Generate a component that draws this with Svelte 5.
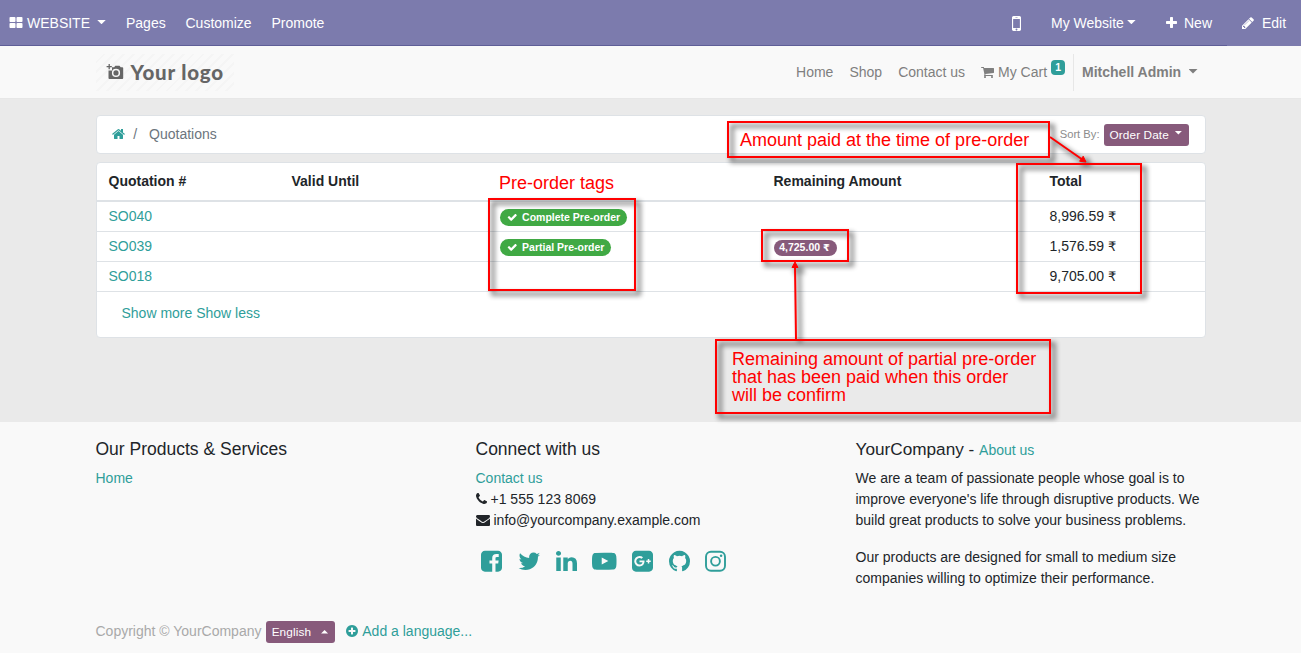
<script>
  const paths = {
    grid: 'M832 1024v384q0 52-38 90t-90 38h-512q-52 0-90-38t-38-90v-384q0-52 38-90t90-38h512q52 0 90 38t38 90zm0-768v384q0 52-38 90t-90 38h-512q-52 0-90-38t-38-90v-384q0-52 38-90t90-38h512q52 0 90 38t38 90zm896 768v384q0 52-38 90t-90 38h-512q-52 0-90-38t-38-90v-384q0-52 38-90t90-38h512q52 0 90 38t38 90zm0-768v384q0 52-38 90t-90 38h-512q-52 0-90-38t-38-90v-384q0-52 38-90t90-38h512q52 0 90 38t38 90z',
    mobile: 'M976 1408q0-33-23.5-56.5t-56.5-23.5-56.5 23.5-23.5 56.5 23.5 56.5 56.5 23.5 56.5-23.5 23.5-56.5zm208-160v-704q0-13-9.5-22.5t-22.5-9.5h-512q-13 0-22.5 9.5t-9.5 22.5v704q0 13 9.5 22.5t22.5 9.5h512q13 0 22.5-9.5t9.5-22.5zm-192-848q0-16-16-16h-160q-16 0-16 16t16 16h160q16 0 16-16zm288-16v1024q0 52-38 90t-90 38h-512q-52 0-90-38t-38-90v-1024q0-52 38-90t90-38h512q52 0 90 38t38 90z',
    plus: 'M1600 736v192q0 40-28 68t-68 28h-416v416q0 40-28 68t-68 28h-192q-40 0-68-28t-28-68v-416h-416q-40 0-68-28t-28-68v-192q0-40 28-68t68-28h416v-416q0-40 28-68t68-28h192q40 0 68 28t28 68v416h416q40 0 68 28t28 68z',
    pencil: 'M491 1536l91-91-235-235-91 91v107h128v128h107zm523-928q0-22-22-22-10 0-17 7l-542 542q-7 7-7 17 0 22 22 22 10 0 17-7l542-542q7-7 7-17zm-54-192l416 416-832 832h-416v-416zm683 96q0 53-37 90l-166 166-416-416 166-165q36-38 90-38 53 0 91 38l235 234q37 39 37 91z',
    cart: 'M704 1536q0 52-38 90t-90 38-90-38-38-90 38-90 90-38 90 38 38 90zm896 0q0 52-38 90t-90 38-90-38-38-90 38-90 90-38 90 38 38 90zm128-1088v512q0 24-16.5 42.5t-40.5 21.5l-1044 122q13 60 13 70 0 16-24 64h920q26 0 45 19t19 45-19 45-45 19h-1024q-26 0-45-19t-19-45q0-11 8-31.5t16-36 21.5-40 15.5-29.5l-177-823h-204q-26 0-45-19t-19-45 19-45 45-19h256q16 0 28.5 6.5t19.5 15.5 13 24.5 8 26 5.5 29.5 4.5 26h1201q26 0 45 19t19 45z',
    home: 'M1472 992v480q0 26-19 45t-45 19h-384v-384h-256v384h-384q-26 0-45-19t-19-45v-480q0-1 .5-3t.5-3l575-474 575 474q1 2 1 6zm223-69l-62 74q-8 9-21 11h-3q-13 0-21-7l-692-577-692 577q-12 8-24 7-13-2-21-11l-62-74q-8-10-7-23.5t11-21.5l719-599q32-26 76-26t76 26l244 204v-195q0-14 9-23t23-9h192q14 0 23 9t9 23v408l219 182q10 8 11 21.5t-7 23.5z',
    check: 'M1671 566q0 40-28 68l-724 724-136 136q-28 28-68 28t-68-28l-136-136-362-362q-28-28-28-68t28-68l136-136q28-28 68-28t68 28l294 295 656-657q28-28 68-28t68 28l136 136q28 28 28 68z',
    phone: 'M1600 1240q0 27-10 70.5t-21 68.5q-21 50-122 106-94 51-186 51-27 0-53-3.5t-57.5-12.5-47-14.5-55.5-20.5-49-18q-98-35-175-83-127-79-264-216t-216-264q-48-77-83-175-3-9-18-49t-20.5-55.5-14.5-47-12.5-57.5-3.5-53q0-92 51-186 56-101 106-122 25-11 68.5-21t70.5-10q14 0 21 3 18 6 53 76 11 19 30 54t35 63.5 31 53.5q3 4 17.5 25t21.5 35.5 7 28.5q0 20-28.5 50t-62 55-62 53-28.5 46q0 9 5 22.5t8.5 20.5 14 24 11.5 19q76 137 174 235t235 174q2 1 19 11.5t24 14 20.5 8.5 22.5 5q18 0 46-28.5t53-62 55-62 50-28.5q14 0 28.5 7t35.5 21.5 25 17.5q25 15 53.5 31t63.5 35 54 30q70 35 76 53 3 7 3 21z',
    envelope: 'M1792 710v794q0 66-47 113t-113 47h-1472q-66 0-113-47t-47-113v-794q44 49 101 87 362 246 497 345 57 42 92.5 65.5t94.5 48 110 24.5h2q51 0 110-24.5t94.5-48 92.5-65.5q170-123 498-345 57-39 100-87zm0-294q0 79-49 151t-122 123q-376 261-468 325-10 7-42.5 31t-54 38.5-52 32.5-57.5 27-50 9h-2q-23 0-50-9t-57.5-27-52-32.5-54-38.5-42.5-31q-91-64-262-182.5t-205-142.5q-62-42-117-115.5t-55-136.5q0-78 41.5-130t118.5-52h1472q65 0 112.5 47t47.5 113z',
    plusCircle: 'M1344 960v-128q0-26-19-45t-45-19h-256v-256q0-26-19-45t-45-19h-128q-26 0-45 19t-19 45v256h-256q-26 0-45 19t-19 45v128q0 26 19 45t45 19h256v256q0 26 19 45t45 19h128q26 0 45-19t19-45v-256h256q26 0 45-19t19-45zm320-64q0 209-103 385.5t-279.5 279.5-385.5 103-385.5-103-279.5-279.5-103-385.5 103-385.5 279.5-279.5 385.5-103 385.5 103 279.5 279.5 103 385.5z',
    facebook: 'M1376 128q119 0 203.5 84.5t84.5 203.5v960q0 119-84.5 203.5t-203.5 84.5h-188v-595h199l30-232h-229v-148q0-56 23.5-84t91.5-28l122-1v-207q-63-9-178-9-136 0-217.5 80t-81.5 226v171h-200v232h200v595h-532q-119 0-203.5-84.5t-84.5-203.5v-960q0-119 84.5-203.5t203.5-84.5h960z',
    twitter: 'M1684 408q-67 98-162 167 1 14 1 42 0 130-38 259.5t-115.5 248.5-184.5 210.5-258 146-323 54.5q-271 0-496-145 35 4 78 4 225 0 401-138-105-2-188-64.5t-114-159.5q33 5 61 5 43 0 85-11-112-23-185.5-111.5t-73.5-205.5v-4q68 38 146 41-66-44-105-115t-39-154q0-88 44-163 121 149 294.5 238.5t371.5 99.5q-8-38-8-74 0-134 94.5-228.5t228.5-94.5q140 0 236 102 109-21 205-78-37 115-142 178 93-10 186-50z',
    linkedin: 'M477 625v991h-330v-991h330zm21-306q1 73-50.5 122t-135.5 49h-2q-82 0-132-49t-50-122q0-74 51.5-122.5t134.5-48.5 133 48.5 51 122.5zm1166 729v568h-329v-530q0-105-40.5-164.5t-126.5-59.5q-63 0-105.5 34.5t-63.5 85.5q-11 30-11 81v553h-329q2-399 2-647t-1-296l-1-48h329v144h-2q20-32 41-56t56.5-52 87-43.5 114.5-15.5q171 0 275 113.5t104 332.5z',
    youtube: 'M711 1128l484-250-484-253v503zm185-862q168 0 324.5 4.5t229.5 9.5l73 4q1 0 17 1.5t23 3 23.5 4.5 28.5 8 28 13 31 19.5 29 26.5q6 6 15.5 18.5t29 58.5 26.5 101q8 64 12.5 136.5t5.5 113.5v176q1 145-18 290-7 55-25 99.5t-32 61.5l-14 17q-14 15-29 26.5t-31 19-28 12.5-28.5 8-24 4.5-23 3-16.5 1.5q-251 19-627 19-207-2-359.5-6.5t-200.5-7.5l-49-4-36-4q-36-5-54.5-10t-51-21-56.5-41q-6-6-15.5-18.5t-29-58.5-26.5-101q-8-64-12.5-136.5t-5.5-113.5v-176q-1-145 18-290 7-55 25-99.5t32-61.5l14-17q14-15 29-26.5t31-19.5 28-13 28.5-8 23.5-4.5 23-3 17-1.5q251-18 627-18z',
    google: 'M1045 905q0-26-6-64h-362v132h217q-3 24-16.5 50t-37.5 53-66.5 44.5-96.5 17.5q-99 0-169-71t-70-171 70-171 169-71q92 0 153 59l104-101q-108-100-257-100-160 0-272 112.5t-112 271.5 112 271.5 272 112.5q165 0 266.5-105t101.5-270zm345 46h109v-110h-109v-110h-110v110h-110v110h110v110h110v-110zm274-535v960q0 119-84.5 203.5t-203.5 84.5h-960q-119 0-203.5-84.5t-84.5-203.5v-960q0-119 84.5-203.5t203.5-84.5h960q119 0 203.5 84.5t84.5 203.5z',
    github: 'M896 128q209 0 385.5 103t279.5 279.5 103 385.5q0 251-146.5 451.5t-378.5 277.5q-27 5-40-7t-13-30q0-3 .5-76.5t.5-134.5q0-97-52-142 57-6 102.5-18t94-39 81-66.5 53-105 20.5-150.5q0-119-79-206 37-91-8-204-28-9-81 11t-92 44l-38 24q-93-26-192-26t-192 26q-16-11-42.5-27t-83.5-38.5-85-13.5q-45 113-8 204-79 87-79 206 0 85 20.5 150t52.5 105 80.5 67 94 39 102.5 18q-39 36-49 103-21 10-45 15t-57 5-65.5-21.5-55.5-62.5q-19-32-48.5-52t-49.5-24l-20-3q-21 0-29 4.5t-5 11.5 9 14 13 12l7 5q22 10 43.5 38t31.5 51l10 23q13 38 44 61.5t67 30 69.5 7 55.5-3.5l23-4q0 38 .5 88.5t.5 54.5q0 18-13 30t-40 7q-232-77-378.5-277.5t-146.5-451.5q0-209 103-385.5t279.5-279.5 385.5-103z'
  };

  const orders = [
    { name: 'SO040', tag: 'Complete Pre-order', remaining: '', total: '8,996.59' },
    { name: 'SO039', tag: 'Partial Pre-order', remaining: '4,725.00', total: '1,576.59' },
    { name: 'SO018', tag: '', remaining: '', total: '9,705.00' }
  ];

  const links = ['Home', 'Shop', 'Contact us'];
</script>

{#snippet icon(name, size = 14, x = 128, w = 1536)}
  <svg class="icon" width={(size * w) / 1792} height={size} viewBox="{x} 0 {w} 1792" aria-hidden="true"><path d={paths[name]} /></svg>
{/snippet}

{#snippet money(value)}
  {value}&nbsp;<span class="rupee">₹</span>
{/snippet}

{#snippet marks()}
  <rect x="728" y="122" width="321" height="35" />
  <rect x="489" y="199" width="146" height="91" />
  <rect x="762" y="230" width="86" height="31" />
  <rect x="1017" y="164" width="124" height="129" />
  <rect x="716" y="340" width="334" height="73" />
  <path d="M1050 137L1083 160M796 339L795 266" />
  <path class="tip" d="M1086 162l-6.4-.8 3.6-5zM795 262l3 5.5h-6z" />
{/snippet}

<div class="page">
  <nav class="topbar">
    <a class="site" href="#top">{@render icon('grid', 14, 0, 1792)}<span>WEBSITE</span><i class="caret"></i></a>
    <a class="pages" href="#top">Pages</a>
    <a class="customize" href="#top">Customize</a>
    <a href="#top">Promote</a>
    <div class="right">
      <a class="mobile" href="#top" aria-label="Mobile preview">{@render icon('mobile', 21, 512, 768)}</a>
      <a class="mysite" href="#top">My Website<i class="caret"></i></a>
      <a class="new" href="#top">{@render icon('plus', 14, 192, 1408)}<span>New</span></a>
      <a class="edit" href="#top">{@render icon('pencil', 14)}<span>Edit</span></a>
    </div>
  </nav>

  <header>
    <div class="container head">
      <a class="logo" href="#top">
        <svg width="18" height="18" viewBox="0 0 18 18" aria-hidden="true">
          <path fill="#666" fill-rule="evenodd" d="M6 4.2h2.1l1.2-1.5h4.2l1.2 1.5h1.6q.9 0 .9.9v10q0 .9-.9.9H3.4q-.9 0-.9-.9V7.6H6zM10 5.8a4.1 4.1 0 1 0 0 8.2 4.1 4.1 0 0 0 0-8.2zm0 1.5a2.6 2.6 0 1 1 0 5.2 2.6 2.6 0 0 1 0-5.2z" />
          <path d="M3.2 1v5.2M.6 3.6h5.2" stroke="#666" stroke-width="1.3" />
        </svg>
        <span>Your logo</span>
      </a>
      <div class="menu">
        {#each links as l}<a href="#top">{l}</a>{/each}
        <a class="cart" href="#top">{@render icon('cart', 14, 64, 1664)}<span>My Cart</span><sup>1</sup></a>
        <a class="user" href="#top">Mitchell Admin<i class="caret"></i></a>
      </div>
    </div>
  </header>

  <main>
    <div class="container">
      <div class="crumbs">
        <a href="#top" aria-label="Home">{@render icon('home', 14, 64, 1664)}</a>
        <span class="slash">/</span>
        <span>Quotations</span>
        <span class="sortlabel">Sort By:</span>
        <button class="purple sort">Order Date<i class="caret"></i></button>
      </div>

      <div class="card">
        <div class="row headrow">
          <span>Quotation #</span><span>Valid Until</span><span></span><span>Remaining Amount</span><span>Total</span>
        </div>
        {#each orders as o}
          <div class="row">
            <a href="#top">{o.name}</a>
            <span></span>
            <span>{#if o.tag}<b class="pill green">{@render icon('check', 10.5, 0, 1792)}{o.tag}</b>{/if}</span>
            <span>{#if o.remaining}<b class="pill plum">{@render money(o.remaining)}</b>{/if}</span>
            <span>{@render money(o.total)}</span>
          </div>
        {/each}
        <div class="more"><a href="#top">Show more</a> <a href="#top">Show less</a></div>
      </div>
    </div>
  </main>

  <footer>
    <div class="container">
      <div class="cols">
        <section>
          <h5>Our Products &amp; Services</h5>
          <a href="#top">Home</a>
        </section>
        <section>
          <h5>Connect with us</h5>
          <div><a href="#top">Contact us</a></div>
          <div class="line">{@render icon('phone', 14, 192, 1408)}<span>+1 555 123 8069</span></div>
          <div class="line">{@render icon('envelope', 14, 0, 1792)}<span>info@yourcompany.example.com</span></div>
          <div class="social">
            {@render icon('facebook', 24.5)}
            {@render icon('twitter', 24.5, 64, 1664)}
            {@render icon('linkedin', 24.5)}
            {@render icon('youtube', 24.5, 0, 1792)}
            {@render icon('google', 24.5)}
            {@render icon('github', 24.5)}
            <svg class="icon" width="21" height="24.5" viewBox="0 0 21 24.5" aria-hidden="true">
              <rect x="1" y="2.75" width="19" height="19" rx="5" fill="none" stroke="currentColor" stroke-width="1.9" />
              <circle cx="10.5" cy="12.25" r="4.4" fill="none" stroke="currentColor" stroke-width="1.9" />
              <circle cx="16.1" cy="6.7" r="1.25" />
            </svg>
          </div>
        </section>
        <section>
          <h5>YourCompany - <a href="#top">About us</a></h5>
          <p>We are a team of passionate people whose goal is to<br />improve everyone's life through disruptive products. We<br />build great products to solve your business problems.</p>
          <p>Our products are designed for small to medium size<br />companies willing to optimize their performance.</p>
        </section>
      </div>
      <div class="bottom">
        <span>Copyright © YourCompany</span>
        <button class="purple lang">English<i class="caret up"></i></button>
        <a href="#top">{@render icon('plusCircle', 14)}Add a language...</a>
      </div>
    </div>
  </footer>

  <svg class="notes" width="1301" height="653" viewBox="0 0 1301 653">
    <g class="shade">{@render marks()}</g>
    <g class="shapes">{@render marks()}</g>
    <text x="499" y="189">Pre-order tags</text>
    <text x="740" y="146">Amount paid at the time of pre-order</text>
    <text x="732" y="365">Remaining amount of partial pre-order</text>
    <text x="732" y="383">that has been paid when this order</text>
    <text x="732" y="401">will be confirm</text>
  </svg>
</div>

<style>
  :global(body) { margin: 0; }
  .page { position: relative; width: 1301px; height: 653px; overflow: hidden; display: flex; flex-direction: column; background: #f9f9f9; color: #212529; font: 14px/21px "Liberation Sans", Arial, sans-serif; }
  a { color: #2f9e9a; text-decoration: none; }
  .icon { fill: currentColor; flex: none; }
  .container { width: 1110px; margin: 0 auto; }
  .caret { display: inline-block; width: 9px; height: 4.5px; background: currentColor; clip-path: polygon(0 0, 100% 0, 50% 100%); margin-left: 7px; vertical-align: 3px; }
  .caret.up { clip-path: polygon(0 100%, 100% 100%, 50% 0); }

  .topbar { box-sizing: border-box; flex: none; height: 46px; display: flex; align-items: stretch; background: #7c7bad; border-bottom: 1px solid #5f5e97; padding-left: 9px; }
  .topbar a { color: #fff; display: flex; align-items: center; height: 46px; }
  .site span { margin-left: 4px; }
  .site { width: 117px; }
  .site .caret, .mysite .caret { margin-top: -2px; }
  .pages { width: 59.5px; }
  .customize { width: 86px; }
  .right { display: flex; margin-left: auto; }
  .mobile { width: 39px; }
  .mysite { width: 115px; }
  .mysite .caret { margin-left: 3px; }
  .new span { margin-left: 7px; }
  .new { width: 61px; }
  .topbar .edit { padding: 0 15px; background: #7c7bad; box-sizing: border-box; width: 74px; }
  .edit span { margin-left: 8px; }

  header { box-sizing: border-box; flex: none; height: 53px; border-bottom: 1px solid #e7e7e7; }
  .head { display: flex; height: 52px; align-items: center; }
  .logo { display: flex; align-items: center; width: 138px; height: 37px; box-sizing: border-box; padding-left: 10px; background: repeating-linear-gradient(135deg, #f9f9f9 0 5px, #f5f5f5 5px 7px); }
  .logo span { font: 900 20.5px/24px Lato, sans-serif; letter-spacing: 0.8px; color: #666; margin-left: 7px; white-space: nowrap; }
  .menu { display: flex; align-items: center; margin-left: auto; gap: 16px; }
  .menu a { color: #7f7f7f; }
  .cart { display: flex; align-items: center; }
  .cart span { margin-left: 4px; }
  sup { width: 14px; height: 15px; margin: -9px 0 0 4px; border-radius: 4px; background: #2f9e9a; color: #fff; font: bold 10.5px/15px "Liberation Sans", sans-serif; text-align: center; }
  .menu .user { font-weight: bold; height: 37px; line-height: 37px; padding: 0 8px; margin-left: -8px; border-left: 1px solid #e7e7e7; }
  .user .caret { margin-left: 7.4px; }

  main { box-sizing: border-box; height: 323px; flex: none; background: #eaeaea; padding-top: 16px; }
  .crumbs { box-sizing: border-box; height: 39px; display: flex; align-items: center; background: #fff; border: 1px solid #dee2e6; border-radius: 4px; padding: 0 16px 0 15.7px; color: #6c757d; }
  .crumbs a { display: flex; }
  .crumbs .icon { margin-top: -1px; }
  .slash { margin: 0 12px 0 8px; }
  .sortlabel { margin-left: auto; font-size: 11.2px; color: #8c8c8c; margin-right: 4px; }
  .purple { box-sizing: border-box; height: 22px; border: 0; border-radius: 3px; background: #875a7b; color: #fff; font: 12px/20px "Liberation Sans", sans-serif; padding: 0 6px; text-align: left; }
  .purple .caret { width: 7px; height: 3.5px; margin-left: 6px; vertical-align: 4px; }
  .purple .caret.up { margin-left: 10px; vertical-align: 2px; }
  .purple.sort, .purple.lang { font-size: 11.8px; letter-spacing: 0.1px; }
  .sort { width: 85px; }
  .card { box-sizing: border-box; height: 176px; margin-top: 8px; background: #fff; border: 1px solid #dee2e6; border-radius: 4px; }
  .row { display: grid; grid-template-columns: 183px 208.5px 273.5px 276px 1fr; box-sizing: border-box; height: 30px; padding-left: 12px; line-height: 29px; border-bottom: 1px solid #dee2e6; }
  .row.headrow { height: 39px; line-height: 36px; padding-bottom: 1px; font-weight: bold; border-bottom-width: 2px; }
  .row > span { display: flex; align-items: center; }
  .rupee { font-family: "DejaVu Sans", sans-serif; font-size: 0.93em; }
  .pill { display: flex; align-items: center; box-sizing: border-box; height: 17px; margin-top: 2px; border-radius: 9px; padding: 0 6.5px; color: #fff; font-size: 10.5px; line-height: 17px; }
  .green { background: #40a944; margin-left: -0.5px; }
  .green .icon { margin: 0 4.6px 0 1px; }
  .plum { background: #875a7b; height: 16px; width: 63px; padding: 0 5.7px; }
  .more { padding: 11px 25px; }

  footer { flex: 1; }
  .cols { display: flex; height: 188px; padding-top: 18px; box-sizing: border-box; }
  section { width: 380px; flex: none; }
  h5 { margin: 0 0 8px; font-size: 17.5px; font-weight: normal; line-height: 18px; height: 20px; white-space: nowrap; }
  section:last-child h5 { font-size: 17.2px; line-height: 18px; }
  h5 a { font-size: 14px; }
  p { margin: 0 0 16px; white-space: nowrap; }
  .line { display: flex; align-items: center; }
  .line .icon { margin-top: -1px; }
  .line span { margin-left: 4px; }
  .social { display: flex; align-items: center; gap: 15.5px; margin: 18px 0 0 5.5px; color: #2f9e9a; }
  .bottom { display: flex; align-items: center; height: 42px; color: #a9a9a9; }
  .lang { width: 69px; margin: 1px 11px 0 4.8px; }
  .purple.lang { padding-left: 5.4px; }
  .bottom a { display: flex; align-items: center; }
  .bottom a .icon { margin-right: 4px; }

  .notes { position: absolute; left: 0; top: 0; pointer-events: none; }
  .notes text { fill: #f00; font-size: 18px; }
  .shapes { fill: none; stroke: #f00; stroke-width: 2; }
  .shapes .tip { fill: #f00; stroke-width: 1; }
  .shade { fill: none; stroke: #000; stroke-width: 4; opacity: 0.43; transform: translate(4px, 4px); filter: blur(2.5px); }
  .shade .tip { fill: #000; }
</style>
